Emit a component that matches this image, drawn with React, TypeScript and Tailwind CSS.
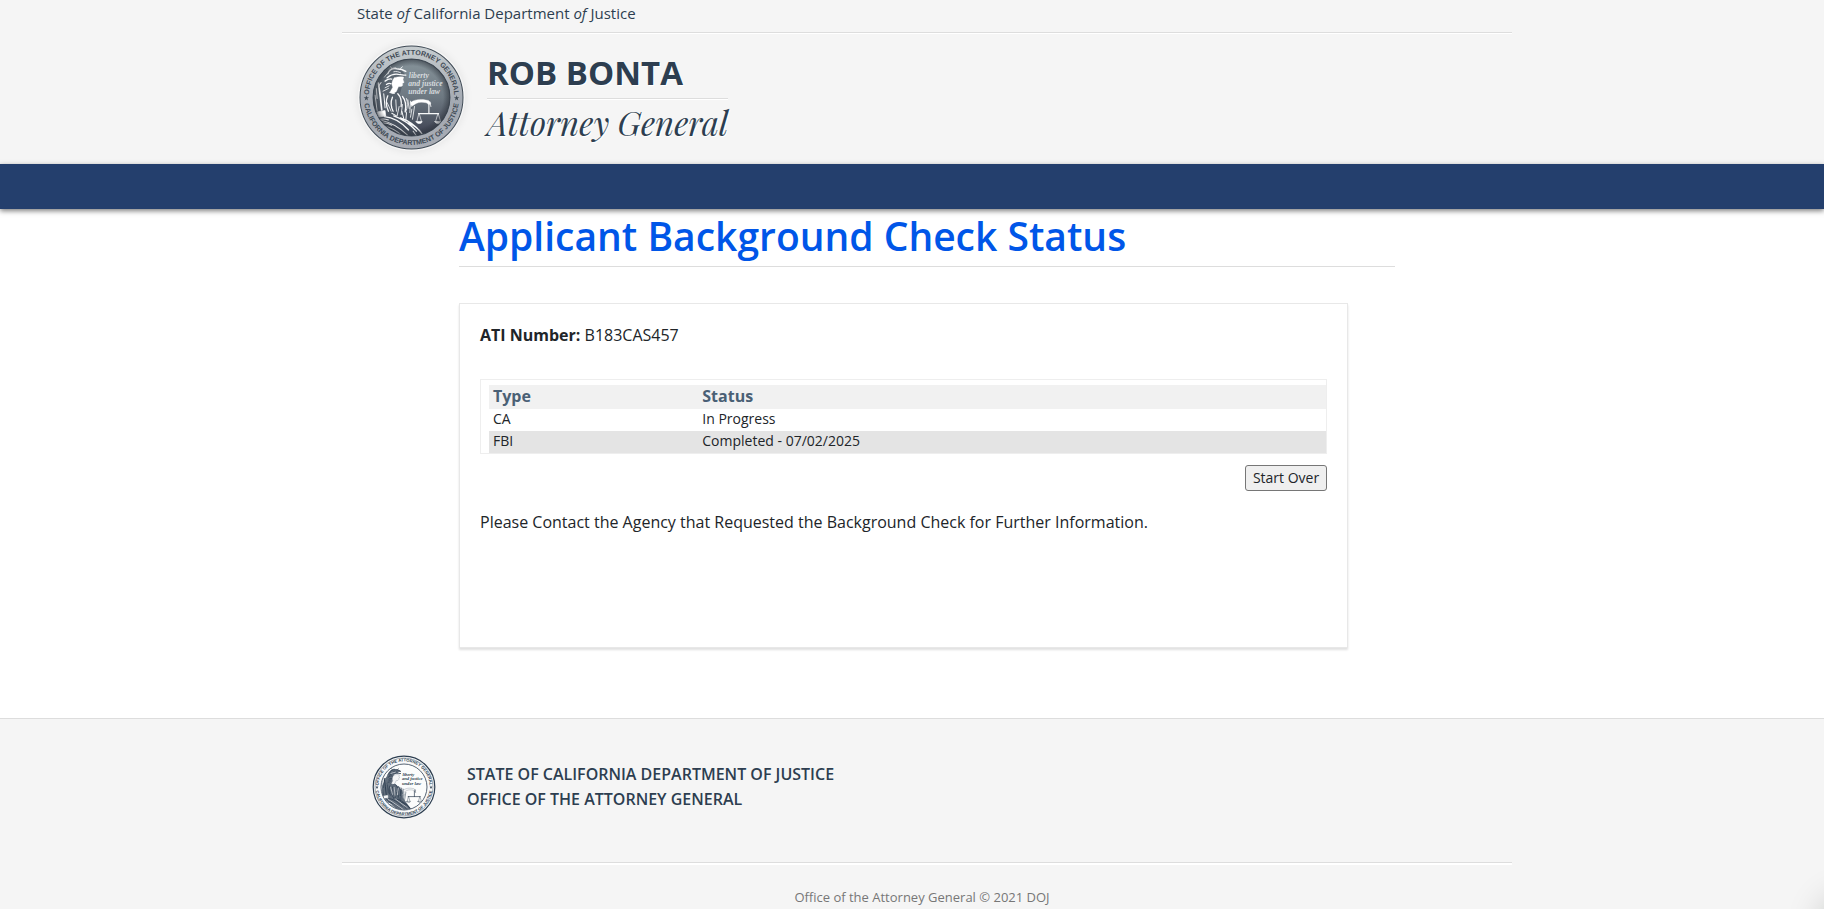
import React from "react";

type SealProps = { className: string; tone: "metal" | "ink" };

/* Seated figure with helmet, spear, robes and scales, on a 372 unit canvas. */
function Figure({ line, fill }: { line: string; fill: string }) {
  return (
    <g fill="none" stroke={line} strokeLinecap="round" strokeLinejoin="round">
      {/* helmet and hair */}
      <path strokeWidth="4" d="M114 114c4-11 14-17 27-15 12 0 20 3 27 8M112 126c10-8 24-12 34-10 10 0 14 3 22 2M106 136c8-6 14-8 20-6M110 146c6-4 10-4 14-2" />
      <path strokeWidth="2.5" d="M118 104c8-5 12-9 20-8M126 98l-4-6M152 98l6-5M104 124l8-10M106 156l12-6M100 166l16-8M132 108c8-2 14 0 20 3" />
      {/* face and neck */}
      <path
        fill={fill}
        strokeWidth="1"
        d="M134 126c10-4 20-4 28-2l-2 8 3 8-5 3 1 5-4 4-9 1-6 14-10 7-10-4 9-16c-5-8-2-22 5-28z"
      />
      {/* spear and left arm */}
      <path strokeWidth="5" d="M86 142l6 42 4 38" />
      <path strokeWidth="3" d="M80 158l2 30M76 178l6 46M102 174l4 42M94 140l-8 12" />
      <path fill={fill} strokeWidth="2" d="M82 228l24-4 2 16-24 4z" />
      <path strokeWidth="3" d="M86 252c10-4 18-4 30 0M92 262c14-2 24 0 34 6" />
      {/* torso */}
      <path strokeWidth="4" d="M114 180c-6 14-6 30 2 46M128 184c-6 14-4 30 2 42M144 174c8 8 12 22 10 38M158 182c10 12 12 26 8 46" />
      <path strokeWidth="2.5" d="M112 200l12 26M138 192l2 34M148 212l-6 28M158 206l-4 30M174 192l4 26M182 196l-2 34M120 170l14 3M170 188c4 10 4 26-2 40" />
      {/* robes */}
      <path strokeWidth="4" d="M104 242c26 2 52 18 72 40M132 240c22 8 50 26 68 46M152 246c24 8 46 24 62 44M176 262c16 6 32 18 42 34" />
      <path strokeWidth="3" d="M96 254c30 6 54 22 78 44M100 270c26 4 44 16 60 32M116 286c16 2 28 8 38 16M156 226l6 22M170 230l-2 24M126 232l14 8M190 286l10 14" />
      {/* outstretched arm */}
      <path fill={fill} strokeWidth="1" d="M182 200c12-9 24-10 38-9l16 3 7 8-5 5-9-6c-12-3-22-2-30 2l-14 9z" />
      <path strokeWidth="2.5" d="M186 220l-4 24M194 212l-6 38M240 198l3 14" />
      {/* scales */}
      <path strokeWidth="3.5" d="M237 204v29M206 233h60" />
      <path strokeWidth="2" d="M207 233l-6 24M208 233l7 24M264 233l-7 24M265 233l7 24" />
      <path fill={fill} strokeWidth="2" d="M199 257h18c-1 8-17 8-18 0zM255 257h18c-1 8-17 8-18 0z" />
    </g>
  );
}

function Seal({ className, tone }: SealProps) {
  const metal = tone === "metal";
  const ink = metal ? "#3f4a55" : "#2d3e50";
  const topArc = `${tone}-top`;
  const bottomArc = `${tone}-bottom`;
  return (
    <svg className={className} viewBox="25 25 320 320" role="img" aria-label="Attorney General seal">
      <defs>
        <linearGradient id={`${tone}-ring`} x1="0" y1="0" x2="0" y2="1">
          <stop offset="0" stopColor={metal ? "#c6cccf" : "#f8f9fa"} />
          <stop offset="0.55" stopColor={metal ? "#a3a9b2" : "#f8f9fa"} />
          <stop offset="1" stopColor={metal ? "#a8acb4" : "#f8f9fa"} />
        </linearGradient>
        <linearGradient id={`${tone}-disc`} x1="0" y1="0" x2="0" y2="1">
          <stop offset="0" stopColor={metal ? "#87949b" : "#fbfcfc"} />
          <stop offset="0.5" stopColor={metal ? "#6d7881" : "#fbfcfc"} />
          <stop offset="1" stopColor={metal ? "#3c4050" : "#fbfcfc"} />
        </linearGradient>
        <radialGradient id={`${tone}-shade`}>
          <stop offset="0.82" stopColor="#2b313a" stopOpacity="0" />
          <stop offset="1" stopColor="#2b313a" stopOpacity={metal ? 0.6 : 0} />
        </radialGradient>
        <clipPath id={`${tone}-clip`}>
          <circle cx="185" cy="185" r="114" />
        </clipPath>
        <path id={topArc} d="M57 185a128 128 0 0 1 256 0" />
        <path id={bottomArc} d="M43 185a142 142 0 0 0 284 0" />
      </defs>
      <circle cx="185" cy="185" r="154" fill={`url(#${tone}-ring)`} stroke={ink} strokeWidth={metal ? 3 : 6} />
      {!metal && <circle cx="185" cy="185" r="145" fill="none" stroke={ink} strokeWidth="2" />}
      <circle cx="185" cy="185" r="115" fill={`url(#${tone}-disc)`} stroke={ink} strokeWidth={metal ? 3 : 4} />
      <g clipPath={`url(#${tone}-clip)`}>
        {!metal && (
          <path
            fill={ink}
            opacity="0.75"
            d="M108 112c12-18 44-22 62-6l-36 18-6 34 22 20 26 24 4 38 40 54-56 10-90-70 4-60z"
          />
        )}
        {metal && (
          <path fill="#48525d" opacity="0.6" d="M84 130l26-28 40-6 16 20-16 60 34 34 4 40 30 50H110l-40-70z" />
        )}
        <Figure line={metal ? "#f8f9fa" : ink} fill={metal ? "#ffffff" : "#f4f5f6"} />
        {!metal && (
          <path
            fill="none"
            stroke="#f8f9fa"
            strokeWidth="3"
            d="M118 184l10 40M136 186l4 42M156 190l-4 36M112 250l70 48M138 242l64 46M96 232l16 22M118 118l26-8"
          />
        )}
      </g>
      <circle cx="185" cy="185" r="115" fill={`url(#${tone}-shade)`} />
      <g
        className="font-['Liberation_Serif',serif] italic"
        fill={metal ? "#d5dadd" : ink}
        fontSize="23"
        fontWeight="700"
      >
        <text x="177" y="128">liberty</text>
        <text x="175" y="151">and justice</text>
        <text x="175" y="174">under law</text>
      </g>
      <g
        className="font-['Liberation_Sans',sans-serif]"
        fill={ink}
        fontSize="21"
        fontWeight="700"
        textAnchor="middle"
      >
        <text>
          <textPath href={`#${topArc}`} startOffset="50%">OFFICE OF THE ATTORNEY GENERAL</textPath>
        </text>
        <text>
          <textPath href={`#${bottomArc}`} startOffset="50%">CALIFORNIA DEPARTMENT OF JUSTICE</textPath>
        </text>
      </g>
      <g fill={ink}>
        <path d="M50 178l2 6h6l-5 4 2 6-5-4-5 4 2-6-5-4h6z" />
        <path d="M320 178l2 6h6l-5 4 2 6-5-4-5 4 2-6-5-4h6z" />
      </g>
    </svg>
  );
}

function Container({ children }: { children: React.ReactNode }) {
  return <div className="mx-auto w-full max-w-[1200px] pl-[30px]">{children}</div>;
}

const rows = [
  { type: "CA", status: "In Progress" },
  { type: "FBI", status: "Completed - 07/02/2025" },
];

export default function App() {
  return (
    <div className="flex min-h-screen flex-col overflow-x-clip bg-white font-['Open_Sans',sans-serif] text-base text-[#212529]">
      <header className="bg-[#f5f5f5] text-[#2d3e50]">
        <Container>
          <p className="border-b border-[#dddddd] px-[15px] pt-[3px] pb-[9px] text-[15px] leading-5 shadow-[0_1px_0_#ffffff]">
            State <em>of</em> California Department <em>of</em> Justice
          </p>
          <div className="flex h-[131px] items-start gap-[22px] px-4 pt-[11px]">
            <Seal
              tone="metal"
              className="size-[107px] shrink-0 rounded-full shadow-[0_0_8px_rgba(0,0,0,0.08)]"
            />
            <div className="pt-2 [text-shadow:1px_1px_0_#ffffff]">
              <p className="border-b border-[#dddddd] pb-1 text-[33px] leading-[42px] font-bold shadow-[0_1px_0_#ffffff]">
                ROB BONTA
              </p>
              <p className="pt-[3px] font-['Playfair_Display','Liberation_Serif',serif] text-[33px] leading-10 italic">
                Attorney General
              </p>
            </div>
          </div>
        </Container>
      </header>
      <nav aria-label="Main" className="relative h-[45px] bg-[#243f6d] shadow-[0_2px_5px_rgba(0,0,0,0.5)]" />

      <main className="pb-[70px]">
        <Container>
          <div className="mx-auto w-4/5">
            <h1 className="border-b border-[#dddddd] pt-[3px] pb-1.5 text-[39px] leading-[48px] font-semibold text-[#0056e8]">
              Applicant Background Check Status
            </h1>
            <section className="mt-9 min-h-[345px] w-[95%] border border-[#e8e8e8] px-5 pt-[19px] pb-5 shadow-[0_2px_2px_rgba(0,0,0,0.12)]">
              <p className="leading-6">
                <strong>ATI Number:</strong> B183CAS457
              </p>
              <div className="mt-8 border border-[#eeeeee] pt-[5px] pl-2">
                <table className="w-full table-fixed border-collapse text-left">
                  <thead>
                    <tr className="bg-[#f1f1f1] text-[#4a6075]">
                      <th className="w-1/4 px-1 pb-px leading-[23px] font-bold">Type</th>
                      <th className="px-1 pb-px leading-[23px] font-bold">Status</th>
                    </tr>
                  </thead>
                  <tbody className="text-sm leading-5">
                    {rows.map((row) => (
                      <tr key={row.type} className="even:bg-[#e4e4e4]">
                        <td className="px-1 pb-0.5">{row.type}</td>
                        <td className="px-1 pb-0.5">{row.status}</td>
                      </tr>
                    ))}
                  </tbody>
                </table>
              </div>
              <div className="mt-[11px] flex justify-end">
                <button
                  type="button"
                  className="rounded-[3px] border border-[#767676] bg-[#efefef] px-[7px] text-sm leading-6"
                >
                  Start Over
                </button>
              </div>
              <p className="mt-[19px] leading-6">
                Please Contact the Agency that Requested the Background Check for Further Information.
              </p>
            </section>
          </div>
        </Container>
      </main>

      <footer className="flex-1 border-t border-[#dddddd] bg-[#f5f5f5]">
        <Container>
          <div className="flex h-[144px] items-start gap-[31px] border-b border-[#dddddd] px-[30px] pt-9 shadow-[0_2px_0_#ffffff]">
            <Seal tone="ink" className="size-16 shrink-0" />
            <p className="pt-[7px] leading-[25px] font-semibold text-[#2d3e50]">
              STATE OF CALIFORNIA DEPARTMENT OF JUSTICE
              <br />
              OFFICE OF THE ATTORNEY GENERAL
            </p>
          </div>
          <p className="pt-[23px] pr-[10px] text-center text-[13px] leading-[22px] text-[#777777]">
            Office of the Attorney General © 2021 DOJ
          </p>
        </Container>
      </footer>

      <div
        aria-hidden="true"
        className="fixed -right-14 -bottom-12 size-[60px] rounded-full bg-[#dde8f6] shadow-[0_0_36px_rgba(0,20,10,0.2)]"
      />
    </div>
  );
}
